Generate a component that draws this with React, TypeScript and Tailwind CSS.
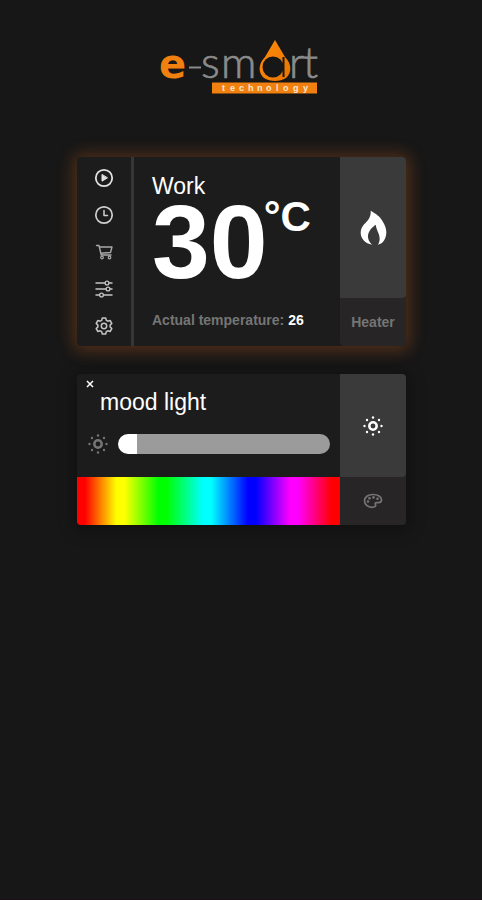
import { useState } from "react";
import type { ReactNode } from "react";

function Logo() {
  return (
    <svg width="163" height="54" viewBox="0 0 163 54" overflow="visible" role="img" aria-label="e-smart technology">
      <defs>
        <linearGradient id="drop" x1="0" y1="0" x2="1" y2="1">
          <stop offset="0" stopColor="#ff8c0a" />
          <stop offset="1" stopColor="#e87400" />
        </linearGradient>
      </defs>
      <text x="-1" y="38" fontSize="40" fontWeight="700" fill="#f08010" fontFamily="'DejaVu Sans', sans-serif">e</text>
      <path d="M29 27.500h12" stroke="#8b8b8b" strokeWidth="2" />
      <text x="41 61" y="38" fontSize="44" fontWeight="300" fill="#8b8b8b" stroke="#8b8b8b" strokeWidth="0.700" fontFamily="Lato, sans-serif">sm</text>
      <path
        d="M115 0L105 17C98 24 98 33 104 38C110 42 120 42 126 38C132 33 132 24 125 17Z"
        fill="url(#drop)"
      />
      <circle cx="113" cy="27" r="10.500" fill="#171717" />
      <path d="M123.500 17v20" stroke="#171717" strokeWidth="2" />
      <text x="129 143" y="38" fontSize="44" fontWeight="300" fill="#8b8b8b" stroke="#8b8b8b" strokeWidth="0.700" fontFamily="Lato, sans-serif">rt</text>
      <path d="M52 42.500h105v11H52z" fill="#f08010" />
      <text
        x="62 70 79 88 97 106 116 123 133 143"
        y="51"
        fontSize="9"
        fontWeight="700"
        fill="#ffe9cf"
        fontFamily="'Liberation Sans', Arial, sans-serif"
      >
        technology
      </text>
    </svg>
  );
}

function LineIcon({ children }: { children: ReactNode }) {
  return (
    <svg
      width="20"
      height="20"
      viewBox="0 0 20 20"
      fill="none"
      stroke="currentColor"
      strokeWidth="1.5"
      strokeLinecap="round"
      strokeLinejoin="round"
      aria-hidden="true"
    >
      {children}
    </svg>
  );
}

const tools: { label: string; icon: ReactNode; tone: string }[] = [
  {
    label: "Start",
    tone: "text-[#e2e2e2]",
    icon: (
      <>
        <circle cx="10" cy="10" r="8.200" strokeWidth="1.800" />
        <path d="M8 6.800v6.400l5.200-3.200z" fill="currentColor" strokeWidth="1" />
      </>
    ),
  },
  {
    label: "Schedule",
    tone: "text-[#cfcfcf]",
    icon: (
      <>
        <circle cx="10" cy="10" r="8.200" strokeWidth="1.700" />
        <path d="M10 5.500V10.500h3.500" />
      </>
    ),
  },
  {
    label: "Shop",
    tone: "text-[#a8a8a8]",
    icon: (
      <>
        <path d="M2.500 3.500h2.500l2.200 9.500h9.800M5.500 5h12.500l-1.500 5.500-9.500.8" strokeWidth="1.400" />
        <circle cx="8" cy="15.500" r="1.300" strokeWidth="1.200" />
        <circle cx="15.500" cy="15.500" r="1.300" strokeWidth="1.200" />
      </>
    ),
  },
  {
    label: "Adjust",
    tone: "text-[#c4c4c4]",
    icon: (
      <>
        <path d="M2 4h9M15 4h3M2 10h10M16 10h2M2 16h3.500M9.500 16h8.500" />
        <circle cx="13" cy="4" r="1.900" strokeWidth="1.300" />
        <circle cx="14" cy="10" r="1.900" strokeWidth="1.300" />
        <circle cx="7.500" cy="16" r="1.900" strokeWidth="1.300" />
      </>
    ),
  },
  {
    label: "Settings",
    tone: "text-[#c4c4c4]",
    icon: (
      <>
        <path d="M8.300 2h3.400l.6 2.300 1.500.9 2.300-.7 1.700 2.900-1.700 1.700v1.800l1.700 1.700-1.700 2.900-2.300-.7-1.500.9-.6 2.300H8.300l-.6-2.300-1.500-.9-2.300.7-1.700-2.900 1.700-1.700V9.100L2.200 7.400l1.700-2.900 2.300.7 1.500-.9z" />
        <circle cx="10" cy="10" r="2.700" />
      </>
    ),
  },
];

function SunIcon() {
  return (
    <svg width="20" height="20" viewBox="0 0 20 20" fill="none" aria-hidden="true">
      <circle cx="10" cy="10" r="3.700" stroke="currentColor" strokeWidth="2.500" />
      <g fill="currentColor">
        <circle cx="10" cy="1.500" r="1.200" />
        <circle cx="10" cy="18.500" r="1.200" />
        <circle cx="1.500" cy="10" r="1.200" />
        <circle cx="18.500" cy="10" r="1.200" />
        <circle cx="4" cy="4" r="1.200" />
        <circle cx="16" cy="4" r="1.200" />
        <circle cx="4" cy="16" r="1.200" />
        <circle cx="16" cy="16" r="1.200" />
      </g>
    </svg>
  );
}

function FlameIcon() {
  return (
    <svg width="27" height="36" viewBox="28 30 81 108" aria-hidden="true">
      <path
        d="M60 32C74 40 90 50 97 66C103 76 107 86 107 98C106 116 98 130 82 134C88 124 88 114 85 104C82 94 77 88 75 74C64 82 54 92 52 106C51 116 55 126 64 134C44 130 30 116 30 98C30 86 35 77 45 68C55 58 61 48 60 32Z"
        fill="white"
      />
    </svg>
  );
}

function PaletteIcon() {
  return (
    <svg width="20" height="16" viewBox="0 0 20 16" fill="none" stroke="currentColor" aria-hidden="true">
      <path
        d="M10 1.500C5 1.500 1.500 4.200 1.500 7.800C1.500 11.500 5 14.300 8.800 14.300C12 14.300 13.500 12.800 12.500 11.500C11.800 10.300 12.300 9.600 13.600 9.600H15.500C17.500 9.600 18.500 8.300 18.500 6.700C18.500 3.600 14.800 1.500 10 1.500Z"
        strokeWidth="1.700"
      />
      <g fill="currentColor" stroke="none">
        <circle cx="5" cy="8.500" r="1.300" />
        <circle cx="6.500" cy="5.200" r="1.300" />
        <circle cx="10.500" cy="4.400" r="1.300" />
        <circle cx="14.500" cy="5.800" r="1.300" />
      </g>
    </svg>
  );
}

function HeaterCard() {
  return (
    <section className="flex rounded bg-[#1c1c1c] shadow-[0_1px_16px_4px_rgba(255,120,30,0.25)]">
      <nav aria-label="Heater tools" className="flex w-[54px] flex-col items-center gap-[17px] pt-[11px]">
        {tools.map((tool) => (
          <button key={tool.label} type="button" aria-label={tool.label} className={tool.tone}>
            <LineIcon>{tool.icon}</LineIcon>
          </button>
        ))}
      </nav>
      <div className="w-[3px] bg-[#363636]" />
      <div className="flex-1 pt-[15px] pb-4 pl-[18px]">
        <h2 className="text-[23px] leading-7">Work</h2>
        <div className="flex items-start font-bold">
          <span className="text-[104px] leading-[84px]">30</span>
          <span className="-mt-2 -ml-1 text-[42px] leading-[50px]">°C</span>
        </div>
        <p className="mt-[26px] text-sm leading-5 font-bold whitespace-nowrap text-[#757575]">
          Actual temperature: <span className="text-white">26</span>
        </p>
      </div>
      <div className="flex w-[66px] flex-col rounded bg-[#272525]">
        <button type="button" aria-label="Heating" className="flex flex-1 items-center justify-center rounded-r bg-[#3a3a3a]">
          <FlameIcon />
        </button>
        <div className="flex h-12 items-center justify-center text-sm font-bold text-[#757575]">Heater</div>
      </div>
    </section>
  );
}

function MoodLightCard() {
  const [level, setLevel] = useState(9);
  const [hue, setHue] = useState(0);
  return (
    <section className="flex overflow-hidden rounded bg-[#1c1c1c] shadow-[0_2px_16px_4px_rgba(0,0,0,0.28)]">
      <div className="flex flex-1 flex-col">
        <div className="h-[103px] pt-[4px] pr-[10px] pl-[9px]">
          <button type="button" aria-label="Close" className="block h-3 w-2 text-white">
            <svg width="8" height="12" viewBox="0 0 8 12" stroke="currentColor" strokeWidth="1.500" aria-hidden="true">
              <path d="M1 3l6 6M7 3L1 9" />
            </svg>
          </button>
          <h2 className="pl-[14px] text-[23px] leading-6">mood light</h2>
          <label className="mt-5 flex items-center gap-[10px] pl-[2px] text-[#757575]">
            <SunIcon />
            <input
              type="range"
              aria-label="Brightness"
              min={0}
              max={100}
              value={level}
              onChange={(e) => setLevel(Number(e.target.value))}
              className="h-5 min-w-0 flex-1 appearance-none rounded-full [&::-webkit-slider-thumb]:opacity-0"
              style={{ background: `linear-gradient(to right, #ffffff ${level}%, #9b9b9b ${level}%)` }}
            />
          </label>
        </div>
        <input
          type="range"
          aria-label="Colour"
          min={0}
          max={360}
          value={hue}
          onChange={(e) => setHue(Number(e.target.value))}
          className="block h-12 w-full appearance-none bg-[linear-gradient(to_right,#f00_3%,#ff0_15%,#ff0_18%,#0f0_31%,#0f0_34%,#0ff_48%,#0ff_51%,#00f_65%,#00f_68%,#f0f_81%,#f0f_84%,#f00_97%)] [&::-webkit-slider-thumb]:opacity-0"
        />
      </div>
      <div className="flex w-[66px] flex-col bg-[#272525]">
        <button type="button" aria-label="Toggle light" className="flex h-[103px] items-center justify-center rounded-r bg-[#3a3a3a] text-white">
          <SunIcon />
        </button>
        <button type="button" aria-label="Palette" className="flex h-12 items-center justify-center text-[#757575]">
          <PaletteIcon />
        </button>
      </div>
    </section>
  );
}

export default function App() {
  return (
    <main className="flex min-h-screen flex-col border-b border-[#1b0f18] bg-[#171717] pt-10 pr-[76px] pl-[77px] font-['Liberation_Sans',Arial,sans-serif] text-white">
      <header className="mb-[63px] flex justify-center">
        <Logo />
      </header>
      <div className="flex flex-col gap-7">
        <HeaterCard />
        <MoodLightCard />
      </div>
    </main>
  );
}
